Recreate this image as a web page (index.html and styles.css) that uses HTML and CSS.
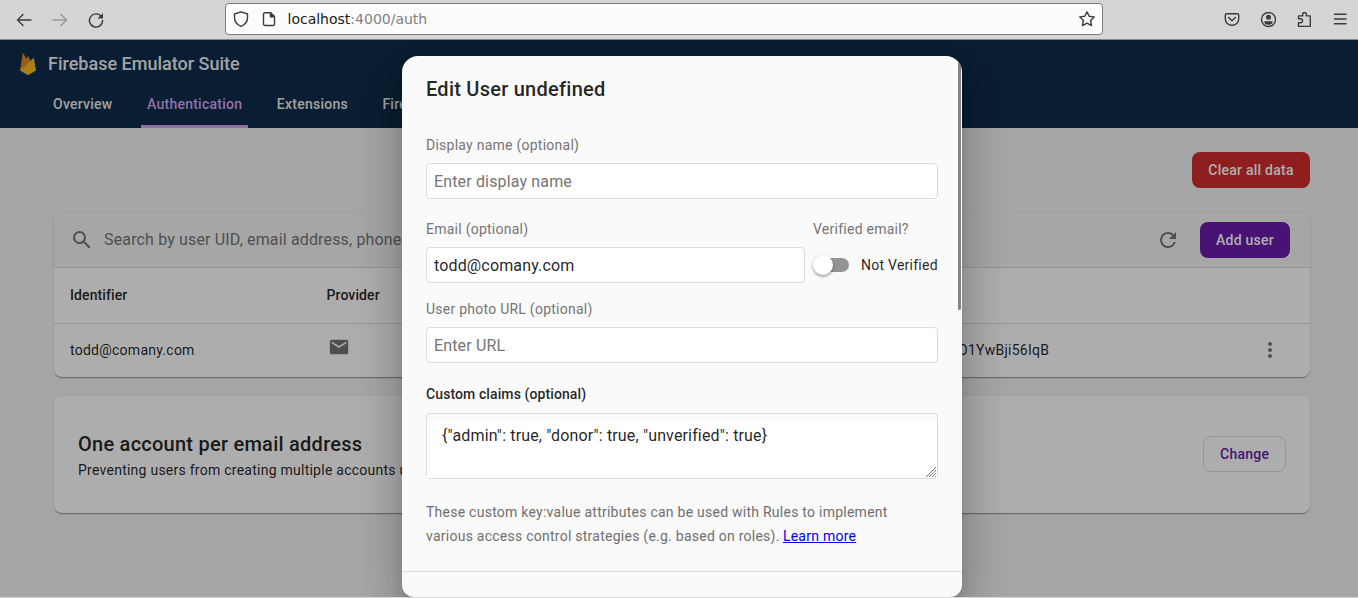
FILE: index.html
```html
<!DOCTYPE html>
<html lang="en">
<head>
<meta charset="utf-8">
<title>Firebase Emulator Suite</title>
<link rel="stylesheet" href="styles.css">
</head>
<body>
<div class="toolbar">
  <div class="nav-buttons">
    <svg width="16" height="16" viewBox="0 0 16 16" class="line"><path d="M15 8H1.500M7 2.500 1.500 8 7 13.500"/></svg>
    <svg width="16" height="16" viewBox="0 0 16 16" class="line faded"><path d="M1 8h13.500M9 2.500 14.500 8 9 13.500"/></svg>
    <svg width="16" height="16" viewBox="0 0 16 16" class="line"><path d="M13.600 5A6.600 6.600 0 1 0 14.600 8.500"/><path d="M15 1v5.500H9.500z" class="solid"/></svg>
  </div>
  <div class="urlbar">
    <svg width="16" height="16" viewBox="0 0 16 16" class="line"><path d="M8 .8 14.500 3v3.500c0 4-2.500 7.300-6.500 8.800-4-1.500-6.500-4.800-6.500-8.800V3z"/></svg>
    <svg width="14" height="16" viewBox="0 0 14 16" class="line page-icon"><path d="M3 1.700h5.500l4 4V13a1.500 1.500 0 0 1-1.500 1.500H3A1.500 1.500 0 0 1 1.500 13V3.200A1.500 1.500 0 0 1 3 1.700z"/><path d="M7.800 1.200h1.200l4 4v1.300H7.800z" class="solid"/></svg>
    <span class="url"><b>localhost</b>:4000/auth</span>
    <svg width="16" height="16" viewBox="0 0 16 16" class="line"><path d="M8 .9 10.200 5.300l5 .6-3.600 3.500.9 5.200L8 12.200l-4.500 2.400.9-5.200L.8 5.900l5-.6z"/></svg>
  </div>
  <div class="tools">
    <svg width="16" height="16" viewBox="0 0 16 16" class="line"><path d="M2.500 1.700h11a1.200 1.200 0 0 1 1.200 1.200V7A6.700 6.300 0 0 1 1.300 7V2.900a1.200 1.200 0 0 1 1.200-1.200zM4.600 5.500 8 8.800 11.400 5.500"/></svg>
    <svg width="16" height="16" viewBox="0 0 16 16" class="line"><circle cx="8.500" cy="7.500" r="7"/><circle cx="8.500" cy="5.300" r="2.500" class="solid"/><path d="M4.500 9.200h8v1a4 2.500 0 0 1-8 0z" class="solid"/></svg>
    <svg width="16" height="16" viewBox="0 0 16 16" class="line"><path d="M2.500 6.700V3.900h4.200V2.300a1.800 1.800 0 0 1 3.600 0v1.600h4v10.500H2.500v-3.600h2a2.050 2.050 0 0 0 0-4.100z"/></svg>
    <svg width="16" height="16" viewBox="0 0 16 16" class="line"><path d="M2.500 2.200h11.500M2.500 7h11.500M2.500 11.700h11.500"/></svg>
  </div>
</div>

<div class="viewport">
  <header class="header">
    <div class="brand">
      <svg width="16" height="22" viewBox="0 0 16 22"><path d="M0 17.500 2.700.6q.3-.8.800-.1l2.900 5.200L7.500 3.500q.4-.6.800 0L16 17.500z" fill="#e08a1e"/><path d="m0 17.500 9.300-9.200L16 17.500z" fill="#e87c10"/><path d="m0 17.500 13.200-12.200q.6-.5.800.3L16 17.500l-7.200 4.200q-.8.400-1.600 0z" fill="#f6bd2c"/></svg>
      <span>Firebase Emulator Suite</span>
    </div>
    <nav class="tabs"><a>Overview</a><a class="active">Authentication</a><a>Extensions</a><a>Firestore</a></nav>
  </header>
  <main class="content">
    <div class="actions"><button class="btn danger">Clear all data</button></div>
    <section class="card users">
      <div class="searchbar">
        <svg width="24" height="24" viewBox="0 0 24 24"><path d="M15.500 14h-.79l-.28-.27A6.471 6.471 0 0 0 16 9.500 6.500 6.500 0 1 0 9.500 16c1.610 0 3.090-.59 4.230-1.570l.27.28v.79l5 4.990L20.490 19l-4.990-5zm-6 0C7.010 14 5 11.990 5 9.500S7.010 5 9.500 5 14 7.010 14 9.500 11.990 14 9.500 14z"/></svg>
        <span class="hint">Search by user UID, email address, phone number, or display name</span>
        <svg width="24" height="24" viewBox="0 0 24 24"><path d="M17.650 6.350A7.958 7.958 0 0 0 12 4a8 8 0 1 0 7.730 10h-2.080A5.990 5.990 0 0 1 12 18c-3.310 0-6-2.690-6-6s2.690-6 6-6c1.660 0 3.140.69 4.220 1.780L13 11h7V4l-2.350 2.350z"/></svg>
        <button class="btn primary">Add user</button>
      </div>
      <div class="row head"><span>Identifier</span><span>Provider</span><span></span><span></span></div>
      <div class="row">
        <span>todd@comany.com</span>
        <svg class="mail" width="22" height="22" viewBox="0 0 24 24"><path d="M20 4H4c-1.100 0-1.990.9-1.990 2L2 18c0 1.100.9 2 2 2h16c1.100 0 2-.9 2-2V6c0-1.100-.9-2-2-2zm0 4-8 5-8-5V6l8 5 8-5v2z"/></svg>
        <span>O1YwBji56IqB</span>
        <svg width="24" height="24" viewBox="0 0 24 24"><path d="M12 8c1.100 0 2-.9 2-2s-.9-2-2-2-2 .9-2 2 .9 2 2 2zm0 2c-1.100 0-2 .9-2 2s.9 2 2 2 2-.9 2-2-.9-2-2-2zm0 6c-1.100 0-2 .9-2 2s.9 2 2 2 2-.9 2-2-.9-2-2-2z"/></svg>
      </div>
    </section>
    <section class="card setting">
      <div class="setting-text">
        <h2>One account per email address</h2>
        <p>Preventing users from creating multiple accounts using the same email</p>
      </div>
      <button class="btn outline">Change</button>
    </section>
  </main>
  <div class="scrim"></div>
  <div class="dialog">
    <form class="form">
      <h1>Edit User undefined</h1>
      <div class="field"><label>Display name (optional)</label><div class="input hint">Enter display name</div></div>
      <div class="email-row">
        <div class="field grow"><label>Email (optional)</label><div class="input">todd@comany.com</div></div>
        <div class="field">
          <label>Verified email?</label>
          <div class="toggle"><span class="track"><span class="knob"></span></span><span>Not Verified</span></div>
        </div>
      </div>
      <div class="field photo"><label>User photo URL (optional)</label><div class="input hint">Enter URL</div></div>
      <div class="field claims">
        <label>Custom claims (optional)</label>
        <div class="textarea"><div class="claims-text">{"admin": true, "donor": true, "unverified": true}</div>
          <svg class="grip" width="12" height="12" viewBox="0 0 12 12"><path d="M1 11 11 1M4 11l7-7M7 11l4-4M10 11l1-1"/></svg>
        </div>
      </div>
      <p class="note">These custom key:value attributes can be used with Rules to implement various access control strategies (e.g. based on roles). <a>Learn more</a></p>
    </form>
    <div class="divider"></div>
    <div class="scrollbar"></div>
  </div>
</div>
<div class="window-edge"></div>
</body>
</html>
```

FILE: styles.css
```css
* { box-sizing: border-box; }
body { margin: 0; width: 1358px; height: 598px; overflow: hidden; display: flex; flex-direction: column; font: 14px/20px Roboto, sans-serif; color: rgba(0, 0, 0, .87); }
svg { display: block; flex: none; }
h1, h2, p { margin: 0; }

.toolbar { height: 40px; flex: none; display: flex; align-items: center; background: #d5d5d5; border-bottom: 1px solid #858585; padding: 0 10px 0 16px; }
.line { fill: none; stroke: #3c3c3c; stroke-width: 1.4; stroke-linejoin: round; stroke-linecap: round; }
.line .solid { fill: #3c3c3c; stroke: none; }
.faded { stroke: #999; }
.nav-buttons { display: flex; gap: 20px; width: 209px; }
.urlbar { width: 878px; height: 32px; margin-top: -2px; border: 1px solid #7c7c7c; border-radius: 4px; background: #fcfcfc; display: flex; align-items: center; padding: 0 7px; }
.page-icon { margin-left: 13px; }
.url { flex: 1; margin-left: 11.500px; font: 14px/20px "DejaVu Sans", sans-serif; color: #818181; }
.url b { font-weight: 400; color: #202020; }
.tools { display: flex; gap: 20px; margin-left: auto; }

.viewport { position: relative; height: 557px; flex: none; overflow: hidden; background: #f4f5f8; }
.header { height: 88px; background: #0e2d4a; color: #fff; display: flex; flex-direction: column; justify-content: space-between; }
.brand { display: flex; align-items: center; gap: 12px; padding: 12px 20px 0; font-size: 18px; font-weight: 500; line-height: 24px; color: rgba(255, 255, 255, .95); }
.tabs { display: flex; padding-left: 47.500px; gap: 23.500px; }
.tabs a { height: 48px; padding: 0 5.500px; line-height: 48px; font-weight: 500; letter-spacing: .25px; color: #ededed; }
.tabs .active { color: #d7a6f5; border-bottom: 3px solid #d7a6f5; border-radius: 2px 2px 0 0; }

.content { padding: 24px 48px 0 54px; }
.actions { display: flex; justify-content: flex-end; }
.btn { height: 36px; padding: 0 16px; border: 0; border-radius: 8px; font: 500 14px/36px Roboto, sans-serif; letter-spacing: .25px; color: #fff; white-space: nowrap; }
.danger { background: #d32f2f; width: 118px; }
.primary { background: #6a1cab; width: 90px; }
.outline { background: none; border: 1px solid #dadce0; color: #6a1cab; line-height: 34px; width: 83px; }
.card { background: #fff; border-radius: 8px; box-shadow: 0 2px 1px -1px rgba(0, 0, 0, .2), 0 1px 1px rgba(0, 0, 0, .14), 0 1px 3px rgba(0, 0, 0, .12); }
.users { margin-top: 24px; height: 165px; overflow: hidden; }
.searchbar { height: 56px; display: flex; align-items: center; background: #f5f5f5; border-bottom: 1px solid #dadce0; padding: 0 20px 0 16px; fill: #757575; }
.searchbar .hint { flex: 1; margin-left: 10px; font-size: 16px; letter-spacing: .15px; }
.searchbar .primary { margin-left: 20px; }
.hint { color: #757575; }
.row { height: 53px; display: grid; grid-template-columns: 256.500px 631.500px 1fr 24px; align-items: center; padding: 0 28px 2px 16px; letter-spacing: .25px; fill: #757575; }
.head { height: 56px; font-weight: 500; border-bottom: 1px solid #dadce0; letter-spacing: .1px; }
.mail { margin: -6px 0 0 1.500px; }
.setting { height: 117px; margin-top: 19px; padding: 0 24px; display: flex; justify-content: space-between; align-items: center; }
.setting-text { margin-top: 2px; }
.outline { margin-top: -1px; }
h2 { font-size: 20px; line-height: 28px; font-weight: 500; letter-spacing: .25px; }
.setting p { line-height: 24px; letter-spacing: .25px; }

.scrim { position: absolute; inset: 0; background: rgba(0, 0, 0, .32); }
.dialog { position: absolute; left: 402px; top: 16px; width: 560px; height: 541px; background: #fafafa; border-radius: 16px 16px 12px 12px; overflow: hidden; box-shadow: 0 11px 15px -7px rgba(0, 0, 0, .2), 0 24px 38px 3px rgba(0, 0, 0, .14), 0 9px 46px 8px rgba(0, 0, 0, .12); }
.form { height: 515px; padding: 17px 24px 0; }
h1 { font-size: 20px; line-height: 32px; font-weight: 500; letter-spacing: .25px; }
.field { display: flex; flex-direction: column; gap: 8px; }
h1 + .field { margin-top: 30px; }
label { line-height: 20px; color: #757575; letter-spacing: .25px; }
.input { height: 36px; border: 1px solid #dcdcdc; border-radius: 4px; background: #fff; padding: 0 7px; font-size: 16px; line-height: 35px; letter-spacing: .15px; }
.email-row { display: flex; gap: 8px; margin-top: 20px; }
.grow { width: 379px; }
.toggle { height: 36px; display: flex; align-items: center; gap: 12px; letter-spacing: .25px; white-space: nowrap; }
.track { position: relative; width: 32px; height: 14px; border-radius: 7px; background: #959595; margin-left: 4px; }
.knob { position: absolute; left: -4px; top: -3px; width: 20px; height: 20px; border-radius: 50%; background: #fff; box-shadow: 0 2px 2px rgba(0, 0, 0, .22), 0 1px 4px rgba(0, 0, 0, .18); }
.photo { margin-top: 16px; }
.claims { margin-top: 21px; gap: 9px; }
.claims label { font-weight: 500; letter-spacing: .1px; color: rgba(0, 0, 0, .87); }
.textarea { position: relative; height: 66px; border: 1px solid #dcdcdc; border-radius: 4px; padding-top: 7px; }
.claims-text { height: 57px; padding: 0 15px; background: #fff; font-size: 16px; line-height: 29px; letter-spacing: .15px; }
.grip { position: absolute; right: 0; bottom: 0; fill: none; stroke: #777; stroke-width: 1; }
.note { margin-top: 21px; line-height: 24px; letter-spacing: .25px; color: #6f6f6f; }
.note a { color: #00e; text-decoration: underline; margin-left: -.5px; }
.divider { height: 1px; background: #dcdcdc; }
.scrollbar { position: absolute; right: 1px; top: 2px; width: 3px; height: 252px; border-radius: 2px; background: #858583; }
.window-edge { height: 1px; background: #d8d8d8; }
```
